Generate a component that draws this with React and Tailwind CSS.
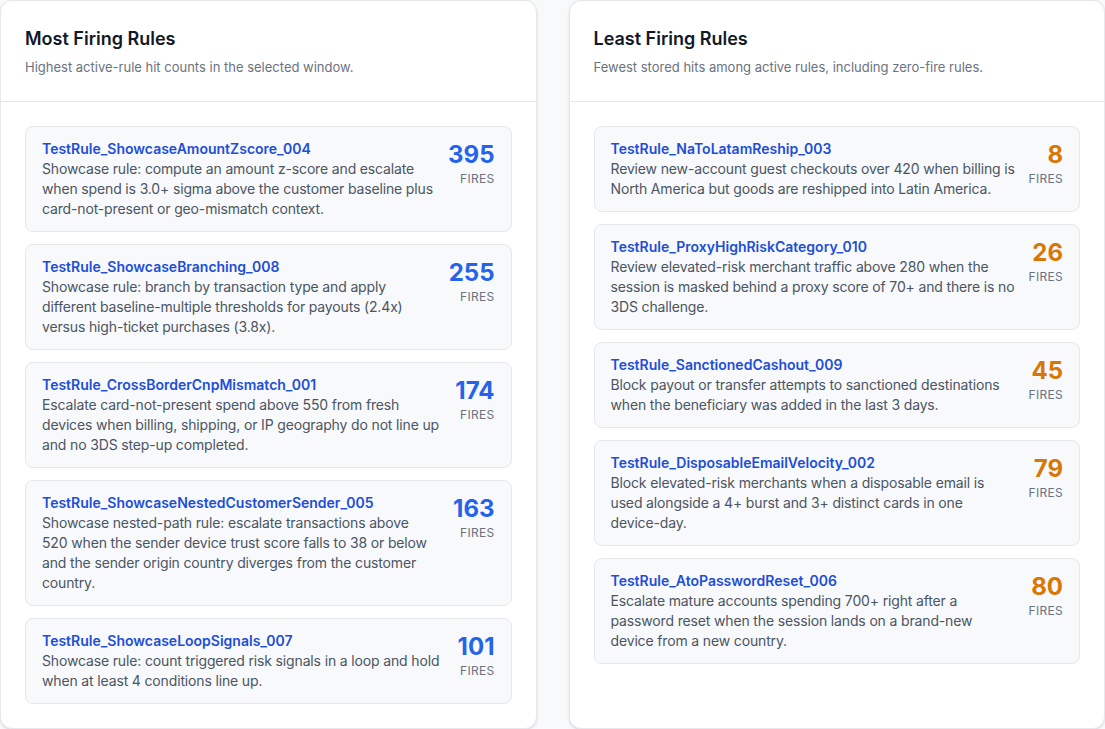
import React from "react";

const most = [
  { name: "TestRule_ShowcaseAmountZscore_004", lines: ["Showcase rule: compute an amount z-score and escalate", "when spend is 3.0+ sigma above the customer baseline plus", "card-not-present or geo-mismatch context."], n: 395 },
  { name: "TestRule_ShowcaseBranching_008", lines: ["Showcase rule: branch by transaction type and apply", "different baseline-multiple thresholds for payouts (2.4x)", "versus high-ticket purchases (3.8x)."], n: 255 },
  { name: "TestRule_CrossBorderCnpMismatch_001", lines: ["Escalate card-not-present spend above 550 from fresh", "devices when billing, shipping, or IP geography do not line up", "and no 3DS step-up completed."], n: 174 },
  { name: "TestRule_ShowcaseNestedCustomerSender_005", lines: ["Showcase nested-path rule: escalate transactions above", "520 when the sender device trust score falls to 38 or below", "and the sender origin country diverges from the customer", "country."], n: 163 },
  { name: "TestRule_ShowcaseLoopSignals_007", lines: ["Showcase rule: count triggered risk signals in a loop and hold", "when at least 4 conditions line up."], n: 101 },
];

const least = [
  { name: "TestRule_NaToLatamReship_003", lines: ["Review new-account guest checkouts over 420 when billing is", "North America but goods are reshipped into Latin America."], n: 8 },
  { name: "TestRule_ProxyHighRiskCategory_010", lines: ["Review elevated-risk merchant traffic above 280 when the", "session is masked behind a proxy score of 70+ and there is no", "3DS challenge."], n: 26 },
  { name: "TestRule_SanctionedCashout_009", lines: ["Block payout or transfer attempts to sanctioned destinations", "when the beneficiary was added in the last 3 days."], n: 45 },
  { name: "TestRule_DisposableEmailVelocity_002", lines: ["Block elevated-risk merchants when a disposable email is", "used alongside a 4+ burst and 3+ distinct cards in one", "device-day."], n: 79 },
  { name: "TestRule_AtoPasswordReset_006", lines: ["Escalate mature accounts spending 700+ right after a", "password reset when the session lands on a brand-new", "device from a new country."], n: 80 },
];

function Card({ r, orange }) {
  return (
    <div className="flex items-start gap-4 rounded-lg border border-[#e5e7eb] bg-[#f8f9fb] px-4 py-3">
      <div className="min-w-0 flex-1">
        <div className="text-sm font-semibold leading-5 text-[#1d4ed8]">{r.name}</div>
        <div className="text-sm leading-5 tracking-[-0.15px] text-[#4b5563]">
          {r.lines.map((l, i) => (
            <div key={i} className="whitespace-nowrap">{l}</div>
          ))}
        </div>
      </div>
      <div className="flex shrink-0 flex-col items-end">
        <div className={"text-2xl font-bold leading-8 " + (orange ? "text-[#d97706]" : "text-[#2563eb]")}>{r.n}</div>
        <div className="text-xs uppercase leading-4 tracking-wide text-[#6b7280]">Fires</div>
      </div>
    </div>
  );
}

function Panel({ title, sub, rows, orange }) {
  return (
    <div className="flex h-full flex-col rounded-xl border border-[#e5e7eb] bg-white shadow-sm">
      <div className="border-b border-[#e5e7eb] px-6 py-6">
        <div className="text-lg font-semibold leading-7 text-[#111827]">{title}</div>
        <div className="mt-1 text-[13px] leading-5 text-[#6b7280]">{sub}</div>
      </div>
      <div className="flex flex-col gap-3 p-6">
        {rows.map((r) => (
          <Card key={r.name} r={r} orange={orange} />
        ))}
      </div>
    </div>
  );
}

export default function App() {
  return (
    <div className="grid h-[729px] w-[1105px] grid-cols-2 gap-8 overflow-hidden bg-[#f8f9fb] pb-px" style={{ fontFamily: "Inter, 'Noto Sans', sans-serif" }}>
      <Panel title="Most Firing Rules" sub="Highest active-rule hit counts in the selected window." rows={most} />
      <Panel title="Least Firing Rules" sub="Fewest stored hits among active rules, including zero-fire rules." rows={least} orange />
    </div>
  );
}
